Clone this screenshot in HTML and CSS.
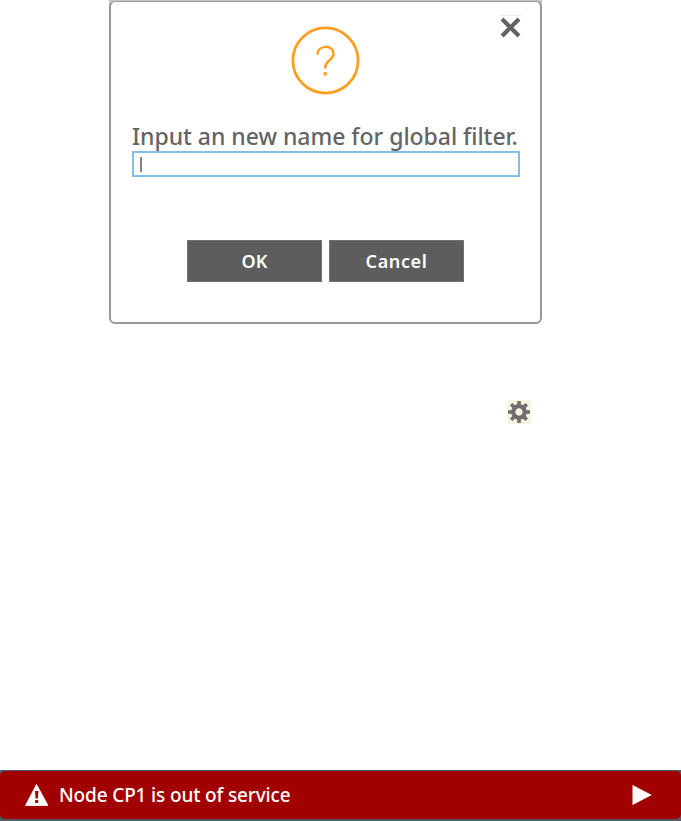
FILE: index.html
```html
<!DOCTYPE html>
<html lang="en">
<head>
<meta charset="utf-8">
<title>Global filter</title>
<link rel="stylesheet" href="styles.css">
</head>
<body>
<main class="page">
  <div class="backdrop">
    <section class="dialog">
      <button class="close" aria-label="Close">
        <svg width="24" height="26" viewBox="0 0 24 26"><path d="M1 1.5h22" stroke="#ececec"/><path d="M4.5 6.5l14 14M18.5 6.5l-14 14" stroke="#606264" stroke-width="4.2" stroke-linecap="square"/></svg>
      </button>
      <svg class="question" width="70" height="70" viewBox="0 0 70 70" fill="none" stroke="#ff9f1f">
        <circle cx="34.5" cy="35.5" r="32.6" stroke-width="2.8"/>
        <path d="M26.5 29.5C26.5 19.5 42.5 19.5 42.5 28.5C42.5 35.5 34.3 35.5 34.3 42V43.5" stroke-width="2.5"/>
        <circle cx="34.3" cy="48.8" r="2" fill="#ffa42c" stroke="none"/>
      </svg>
      <label class="prompt" for="name">Input an new name for global filter.</label>
      <div class="field" id="name"><i class="caret"></i></div>
      <div class="actions">
        <button class="btn">OK</button>
        <button class="btn wide">Cancel</button>
      </div>
    </section>
  </div>
  <div class="gear">
    <svg width="24" height="24" viewBox="-12 -12 24 24" fill="none" stroke="#706d70">
      <circle r="5.8" stroke-width="4.2"/>
      <path d="M0-7V-11M0 7V11M-7 0H-11M7 0H11M-5-5L-7.8-7.8M5-5L7.8-7.8M-5 5L-7.8 7.8M5 5L7.8 7.8" stroke-width="3.6"/>
    </svg>
  </div>
  <div class="alert-frame">
    <div class="alert">
      <svg class="warning" width="24" height="22" viewBox="0 0 24 22"><path d="M11.5 0.5L23 21.5H0.5Z" fill="#fff" stroke="#fff" stroke-width=".8" stroke-linejoin="round"/><path d="M10 7h3.4l-.5 7.5h-2.4zM10.2 16h3v3h-3z" fill="#a20000"/></svg>
      <span class="message">Node CP1 is out of service</span>
      <svg class="play" width="20" height="20" viewBox="0 0 20 20"><path d="M.5 0L19.8 10L.5 20Z" fill="#fff"/></svg>
    </div>
  </div>
</main>
</body>
</html>
```
FILE: styles.css
```css
* { box-sizing: border-box; }
body { margin: 0; background: #fff; font-family: "Noto Sans", "Open Sans", sans-serif; }
.page { width: 681px; height: 821px; display: flex; flex-direction: column; overflow: hidden; }
.backdrop { width: 433px; height: 324px; margin-left: 109px; padding-top: 1px; background: linear-gradient(#c4c4c4 12px, #fff 12px); }
.dialog { position: relative; width: 433px; height: 323px; border: solid #999; border-width: 1px 2px 2px; border-radius: 6px; background: #fff; display: flex; flex-direction: column; align-items: center; padding-top: 23px; }
.close { position: absolute; right: 17px; top: 12px; border: 0; padding: 0; background: none; display: flex; }
.question { display: block; }
.prompt { display: block; width: 387px; height: 32px; margin-top: 24px; line-height: 35px; font-size: 23px; font-weight: 500; letter-spacing: -.03px; color: #646464; white-space: nowrap; }
.field { width: 388px; height: 26px; border: 2px solid #85bee5; padding: 4px 6px; }
.caret { display: block; width: 2px; height: 15px; background: #858585; }
.actions { display: flex; gap: 7px; margin-top: 63px; }
.btn { width: 135px; height: 42px; border: 1px solid #727272; background: #5d5d5d; color: #fff; font: 600 18px/38px "Noto Sans", "Open Sans", sans-serif; padding: 0; }
.wide { letter-spacing: .6px; }
.gear { width: 24px; height: 24px; margin: 76px 0 0 507px; background: #fbf3e2; }
.gear svg { display: block; }
.alert-frame { margin-top: auto; height: 51px; padding: 1px 0 2px; background: #515b63; }
.alert { height: 48px; border-radius: 5px; background: #a20000; display: flex; align-items: center; padding: 0 29px 0 25px; color: #fff; }
.message { margin-left: 10px; font-size: 19px; font-weight: 500; letter-spacing: -.15px; line-height: 28px; white-space: nowrap; }
.play { margin-left: auto; }
```
